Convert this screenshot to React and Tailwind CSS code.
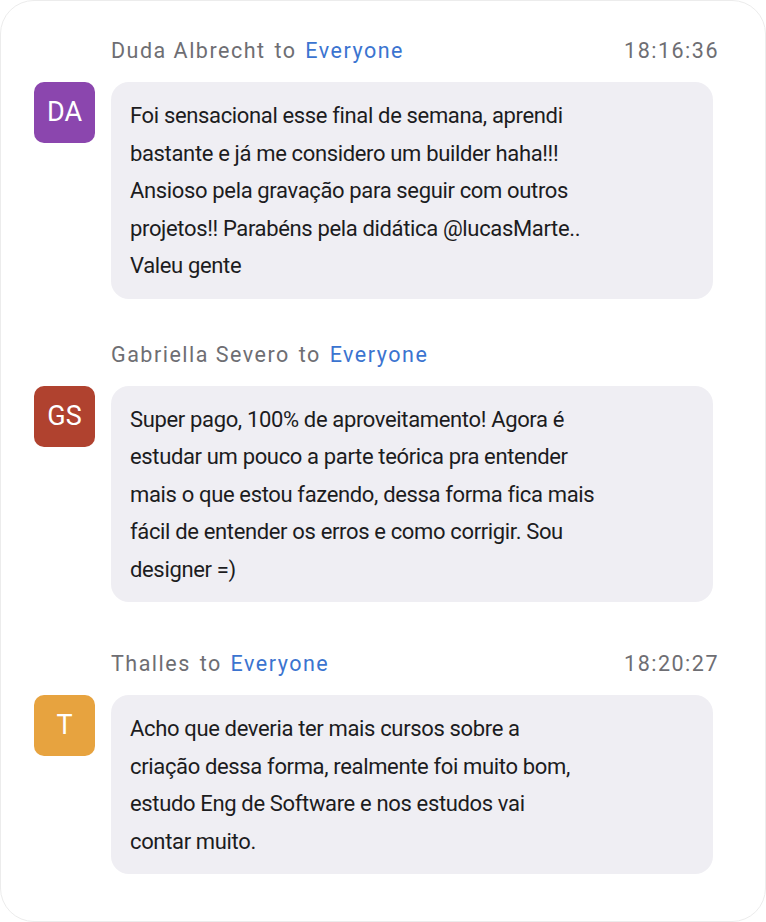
import React from 'react';

const messages = [
  {
    id: 1,
    name: 'Duda Albrecht',
    initials: 'DA',
    color: 'bg-[#8b46ae]',
    time: '18:16:36',
    gap: 'mt-0',
    lines: [
      'Foi sensacional esse final de semana, aprendi',
      'bastante e já me considero um builder haha!!!',
      'Ansioso pela gravação para seguir com outros',
      'projetos!! Parabéns pela didática @lucasMarte..',
      'Valeu gente',
    ],
  },
  {
    id: 2,
    name: 'Gabriella Severo',
    initials: 'GS',
    color: 'bg-[#b0422f]',
    time: '',
    gap: 'mt-[43px]',
    lines: [
      'Super pago, 100% de aproveitamento! Agora é',
      'estudar um pouco a parte teórica pra entender',
      'mais o que estou fazendo, dessa forma fica mais',
      'fácil de entender os erros e como corrigir. Sou',
      'designer =)',
    ],
  },
  {
    id: 3,
    name: 'Thalles',
    initials: 'T',
    color: 'bg-[#e7a33f]',
    time: '18:20:27',
    gap: 'mt-[49px]',
    lines: [
      'Acho que deveria ter mais cursos sobre a',
      'criação dessa forma, realmente foi muito bom,',
      'estudo Eng de Software e nos estudos vai',
      'contar muito.',
    ],
  },
];

function Message({ msg }) {
  return (
    <div className={msg.gap}>
      <div className="ml-[77px] mr-[-6px] flex items-center justify-between text-[21.5px] leading-[26px] tracking-[1.5px]">
        <div className="text-[#6e6e73]">
          {msg.name} <span className="ml-[2px]">to</span>{' '}
          <span className="ml-[2px] text-[#3b74d0]">Everyone</span>
        </div>
        {msg.time && <div className="text-[#6e6e73]">{msg.time}</div>}
      </div>
      <div className="mt-[18px] flex gap-[16px]">
        <div className={`flex h-[61px] w-[61px] shrink-0 items-center justify-center rounded-[10px] text-[27px] text-white ${msg.color}`}>
          {msg.initials}
        </div>
        <div className="flex-1 rounded-[18px] bg-[#efeef3] px-[19px] pb-[14px] pt-[15px] text-[22px] leading-[37.5px] tracking-[-0.35px] text-[#1c1c1e]">
          {msg.lines.map((l, i) => (
            <div key={i} className="whitespace-nowrap">{l}</div>
          ))}
        </div>
      </div>
    </div>
  );
}

export default function App() {
  return (
    <div className="bg-white" style={{ fontFamily: 'Roboto, "Noto Sans", sans-serif' }}>
      <div className="flex h-[922px] flex-col rounded-[34px] border border-[#ececec] bg-white pl-[33px] pr-[52px] pt-[37px]">
        {messages.map((m) => (
          <Message key={m.id} msg={m} />
        ))}
      </div>
    </div>
  );
}
